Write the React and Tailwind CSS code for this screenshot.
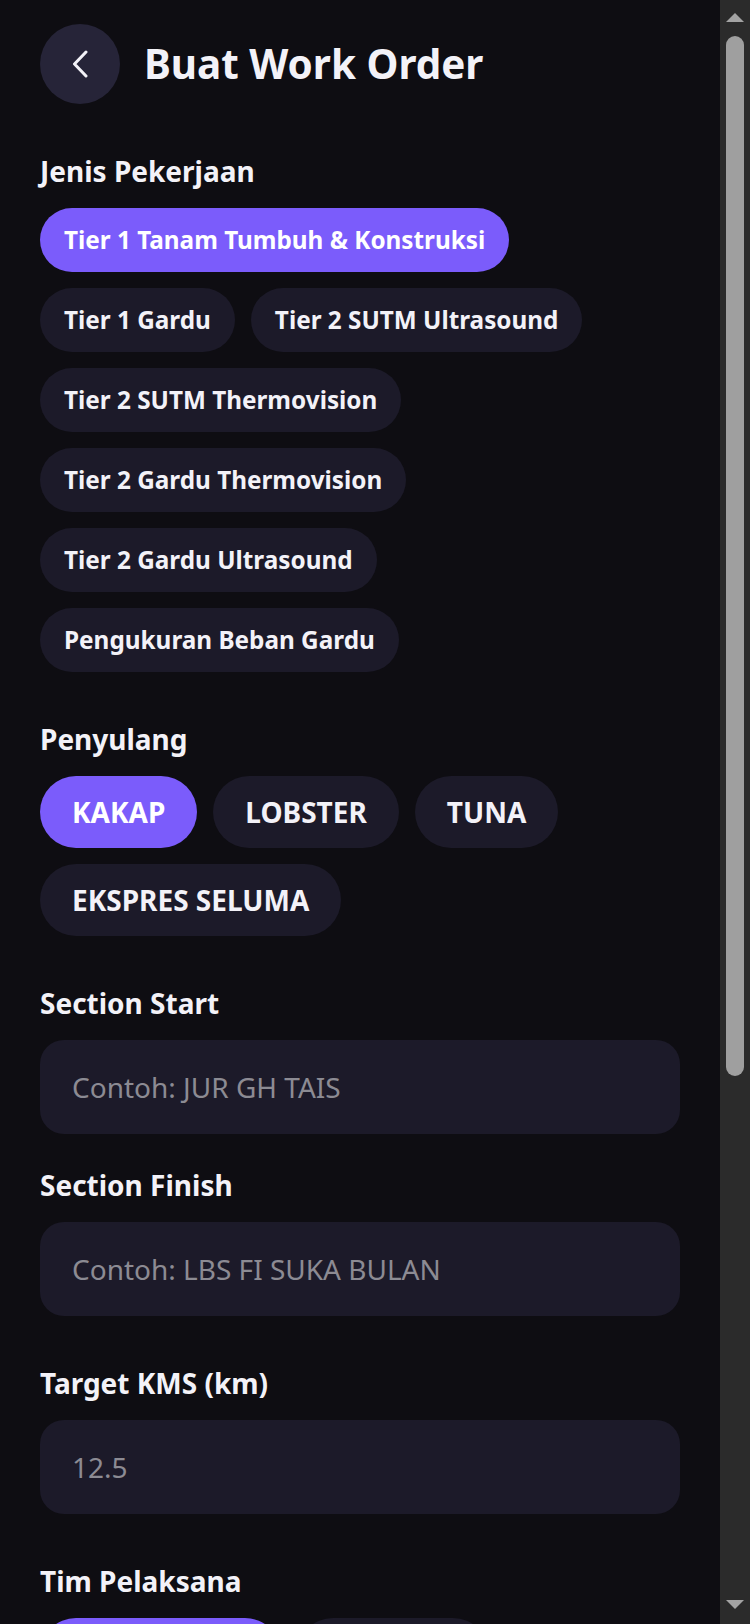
import React from "react";

const jenis = [
  "Tier 1 Tanam Tumbuh & Konstruksi",
  "Tier 1 Gardu",
  "Tier 2 SUTM Ultrasound",
  "Tier 2 SUTM Thermovision",
  "Tier 2 Gardu Thermovision",
  "Tier 2 Gardu Ultrasound",
  "Pengukuran Beban Gardu",
];

const penyulang = ["KAKAP", "LOBSTER", "TUNA", "EKSPRES SELUMA"];
const tim = ["TIM YANTEK", "TIM HAR"];

function Label({ children }) {
  return (
    <div className="text-[28px] leading-[42px] font-bold text-[#f3f2f8] mb-4">
      {children}
    </div>
  );
}

function SmallChip({ active, children }) {
  return (
    <div
      className={
        "h-16 px-6 rounded-full flex items-center text-[24.3px] font-bold whitespace-nowrap " +
        (active ? "bg-[#7b5cfb] text-white" : "bg-[#1c1a29] text-[#f3f2f8]")
      }
    >
      {children}
    </div>
  );
}

function BigChip({ active, wide, children }) {
  return (
    <div
      className={
        "h-[72px] rounded-full flex items-center text-[28px] font-bold whitespace-nowrap " +
        (wide ? "px-[36px] " : "px-8 ") +
        (active ? "bg-[#7b5cfb] text-white" : "bg-[#1c1a29] text-[#f3f2f8]")
      }
    >
      {children}
    </div>
  );
}

function Field({ placeholder }) {
  return (
    <input
      type="text"
      placeholder={placeholder}
      className="w-full h-[94px] rounded-3xl bg-[#1c1a29] px-8 text-[28px] text-[#f3f2f8] placeholder:text-[#8c8b93] outline-none font-['Noto_Sans',sans-serif]"
    />
  );
}

export default function App() {
  return (
    <div className="flex w-full h-[1624px] overflow-hidden bg-[#0e0d12] font-['Noto_Sans',sans-serif]">
      <div className="flex-1 h-full overflow-hidden px-10 pt-6">
        <div className="flex items-center gap-6 h-20">
          <button className="w-20 h-20 rounded-full bg-[#262438] flex items-center justify-center shrink-0">
            <svg width="16" height="28" viewBox="0 0 16 28" fill="none">
              <path
                d="M14 2 L2.5 14 L14 26"
                stroke="#f3f2f8"
                strokeWidth="3"
                strokeLinecap="round"
                strokeLinejoin="round"
              />
            </svg>
          </button>
          <h1 className="text-[40.4px] font-bold text-[#f3f2f8] leading-none">Buat Work Order</h1>
        </div>

        <div className="mt-[46px]">
          <Label>Jenis Pekerjaan</Label>
          <div className="flex flex-wrap gap-4">
            {jenis.map((j, i) => (
              <SmallChip key={j} active={i === 0}>
                {j}
              </SmallChip>
            ))}
          </div>
        </div>

        <div className="mt-[46px]">
          <Label>Penyulang</Label>
          <div className="flex flex-wrap gap-4">
            {penyulang.map((p, i) => (
              <BigChip key={p} active={i === 0}>
                {p}
              </BigChip>
            ))}
          </div>
        </div>

        <div className="mt-[46px]">
          <Label>Section Start</Label>
          <Field placeholder="Contoh: JUR GH TAIS" />
        </div>

        <div className="mt-[30px]">
          <Label>Section Finish</Label>
          <Field placeholder="Contoh: LBS FI SUKA BULAN" />
        </div>

        <div className="mt-[46px]">
          <Label>Target KMS (km)</Label>
          <Field placeholder="12.5" />
        </div>

        <div className="mt-[46px]">
          <Label>Tim Pelaksana</Label>
          <div className="flex flex-wrap gap-4">
            {tim.map((t, i) => (
              <BigChip key={t} active={i === 0} wide>
                {t}
              </BigChip>
            ))}
          </div>
        </div>
      </div>

      <div className="w-[30px] h-full bg-[#2b2b2b] flex flex-col items-center shrink-0">
        <svg className="mt-[13px]" width="18" height="9" viewBox="0 0 18 9">
          <path d="M9 0 L18 9 L0 9 Z" fill="#a3a3a3" />
        </svg>
        <div className="mt-[14px] w-[18px] h-[1040px] rounded-full bg-[#9f9f9f]" />
        <div className="flex-1" />
        <svg className="mb-[15px]" width="18" height="9" viewBox="0 0 18 9">
          <path d="M0 0 L18 0 L9 9 Z" fill="#a3a3a3" />
        </svg>
      </div>
    </div>
  );
}
